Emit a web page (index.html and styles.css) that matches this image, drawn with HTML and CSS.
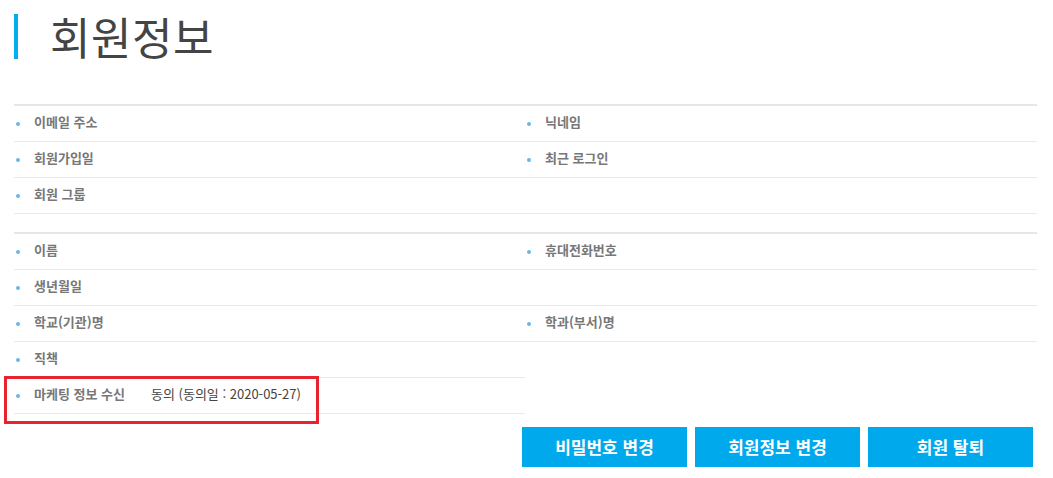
FILE: index.html
```html
<!DOCTYPE html>
<html lang="ko">
<head>
<meta charset="utf-8">
<title>회원정보</title>
<link rel="stylesheet" href="styles.css">
</head>
<body>
<div class="page">
  <h1 class="title">회원정보</h1>

  <div class="info-group">
    <div class="col">
      <div class="cell"><span class="label">이메일 주소</span><span class="value"></span></div>
      <div class="cell"><span class="label">회원가입일</span><span class="value"></span></div>
      <div class="cell"><span class="label">회원 그룹</span><span class="value"></span></div>
    </div>
    <div class="col">
      <div class="cell"><span class="label">닉네임</span><span class="value"></span></div>
      <div class="cell"><span class="label">최근 로그인</span><span class="value"></span></div>
      <div class="cell empty"></div>
    </div>
  </div>

  <div class="info-group second">
    <div class="col">
      <div class="cell"><span class="label">이름</span><span class="value"></span></div>
      <div class="cell"><span class="label">생년월일</span><span class="value"></span></div>
      <div class="cell"><span class="label">학교(기관)명</span><span class="value"></span></div>
      <div class="cell"><span class="label">직책</span><span class="value"></span></div>
      <div class="cell highlight"><span class="label">마케팅 정보 수신</span><span class="value">동의 (동의일 : 2020-05-27)</span></div>
    </div>
    <div class="col">
      <div class="cell"><span class="label">휴대전화번호</span><span class="value"></span></div>
      <div class="cell empty"></div>
      <div class="cell"><span class="label">학과(부서)명</span><span class="value"></span></div>
    </div>
  </div>

  <div class="actions">
    <a class="btn" href="#">비밀번호 변경</a>
    <a class="btn" href="#">회원정보 변경</a>
    <a class="btn" href="#">회원 탈퇴</a>
  </div>
</div>
</body>
</html>
```

FILE: styles.css
```css
* { box-sizing: border-box; }
html, body { margin: 0; padding: 0; background: #fff; }
body {
  font-family: "Noto Sans CJK KR", "Noto Sans", sans-serif;
  color: #333;
}
.page {
  padding: 14px 16px 0 14px;
}
.title {
  margin: 0;
  height: 45px;
  border-left: 4px solid #00aeef;
  padding-left: 32px;
  font-size: 44px;
  font-weight: 400;
  line-height: 44px;
  color: #444;
  letter-spacing: 0.5px;
}
.info-group {
  margin-top: 45px;
  border-top: 2px solid #e6e6e6;
  display: flex;
}
.info-group.second {
  margin-top: 18px;
}
.col {
  flex: 0 0 511px;
  display: flex;
  flex-direction: column;
}
.col + .col { flex: 1 1 auto; }
.cell {
  position: relative;
  height: 36px;
  border-bottom: 1px solid #eaeaea;
  display: flex;
  align-items: center;
  padding-left: 20px;
  padding-bottom: 3px;
  font-size: 13px;
  line-height: 18px;
}
.cell::before {
  content: "";
  position: absolute;
  left: 2px;
  top: 16px;
  width: 4px;
  height: 4px;
  border-radius: 50%;
  background: #6ab6ec;
}
.cell.empty::before { display: none; }
.label {
  flex: 0 0 117px;
  color: #777;
  font-weight: 700;
}
.value {
  color: #444;
}
.highlight::after {
  content: "";
  position: absolute;
  left: -10px;
  top: -2px;
  width: 309px;
  height: 42px;
  border: 3px solid #e8232f;
}
.actions {
  display: flex;
  justify-content: flex-end;
  gap: 8px;
  margin-top: 13px;
  margin-right: 4px;
}
.btn {
  width: 165px;
  height: 40px;
  background: #00a9ec;
  color: #fff;
  font-size: 17px;
  font-weight: 700;
  text-decoration: none;
  display: flex;
  align-items: center;
  justify-content: center;
  padding-bottom: 2px;
}
```
